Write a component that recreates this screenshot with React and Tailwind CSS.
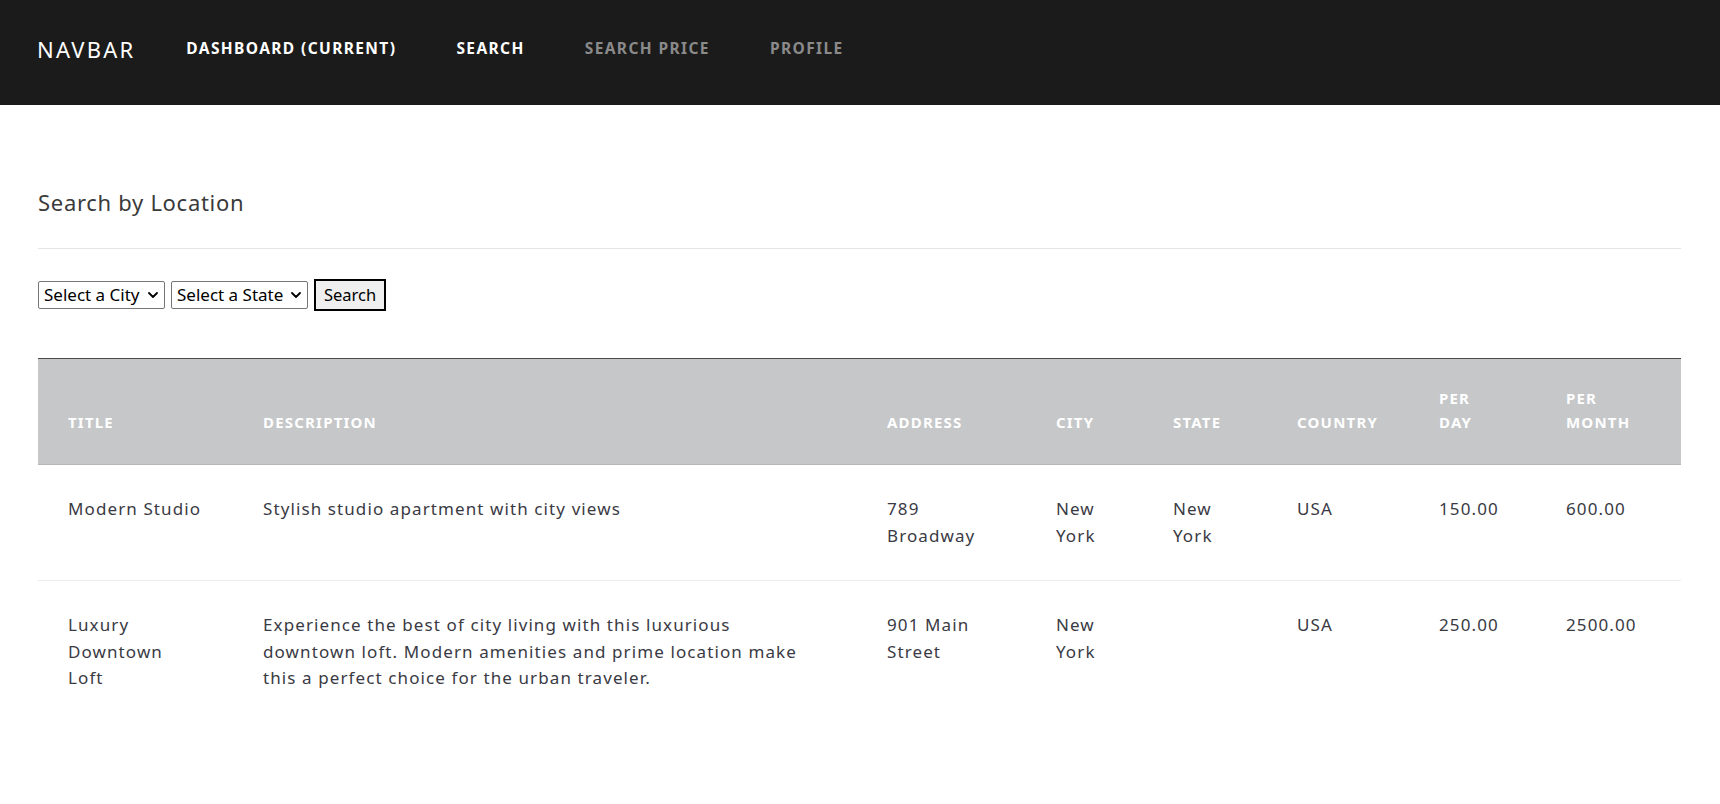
import React from 'react';

const navLinks = [
  { label: 'Dashboard (current)', active: true },
  { label: 'Search', active: true },
  { label: 'Search Price', active: false },
  { label: 'Profile', active: false },
];

const columns = [
  { key: 'title', label: 'Title', width: 'w-[195px]' },
  { key: 'description', label: 'Description', width: 'w-[624px]' },
  { key: 'address', label: 'Address', width: 'w-[169px]' },
  { key: 'city', label: 'City', width: 'w-[117px]' },
  { key: 'state', label: 'State', width: 'w-[124px]' },
  { key: 'country', label: 'Country', width: 'w-[142px]' },
  { key: 'perDay', label: 'Per Day', width: 'w-[127px]' },
  { key: 'perMonth', label: 'Per Month', width: 'w-[145px]' },
];

const listings = [
  {
    title: 'Modern Studio',
    description: 'Stylish studio apartment with city views',
    address: '789 Broadway',
    city: 'New York',
    state: 'New York',
    country: 'USA',
    perDay: '150.00',
    perMonth: '600.00',
  },
  {
    title: 'Luxury Downtown Loft',
    description:
      'Experience the best of city living with this luxurious downtown loft. Modern amenities and prime location make this a perfect choice for the urban traveler.',
    address: '901 Main Street',
    city: 'New York',
    state: '',
    country: 'USA',
    perDay: '250.00',
    perMonth: '2500.00',
  },
];

function Navbar() {
  return (
    <nav className="h-[105px] bg-[#1b1b1b] flex items-center pl-[37px] pb-[7px]">
      <a href="#" className="text-white text-[22px] tracking-[2.2px] mr-[21px]">
        NAVBAR
      </a>
      <ul className="flex items-center">
        {navLinks.map((link) => (
          <li key={link.label}>
            <a
              href="#"
              className={`block px-[30px] text-[15.5px] font-bold uppercase tracking-[1.4px] ${
                link.active ? 'text-white' : 'text-[#8a8a8a]'
              }`}
            >
              {link.label}
            </a>
          </li>
        ))}
      </ul>
    </nav>
  );
}

function Dropdown({ label, width }) {
  return (
    <div className="relative">
      <select
        className={`${width} h-[28px] appearance-none border border-[#767676] rounded-[2px] pl-[5px] pr-[20px] text-[17px] leading-[26px] text-black bg-white`}
      >
        <option>{label}</option>
      </select>
      <svg
        className="absolute right-[7px] top-[11px] pointer-events-none"
        width="10"
        height="6"
        viewBox="0 0 10 6"
        fill="none"
      >
        <path d="M1 1l4 4 4-4" stroke="#000" strokeWidth="1.8" strokeLinecap="round" strokeLinejoin="round" />
      </svg>
    </div>
  );
}

export default function App() {
  return (
    <div className="min-h-screen bg-white text-[#333] font-['Noto_Sans','Open_Sans',sans-serif]">
      <Navbar />

      <main className="pl-[38px] pr-[39px] pt-[82px] pb-[60px]">
        <h2 className="text-[22px] leading-[30px] tracking-[0.7px] text-[#3a3a3a]">Search by Location</h2>
        <hr className="mt-[31px] border-t border-[#e6e6e6]" />

        <form className="mt-[30px] flex items-center gap-[6px]" onSubmit={(e) => e.preventDefault()}>
          <Dropdown label="Select a City" width="w-[127px]" />
          <Dropdown label="Select a State" width="w-[137px]" />
          <button
            type="submit"
            className="h-[32px] w-[72px] border-2 border-black bg-[#efefef] text-[16.5px] text-black"
          >
            Search
          </button>
        </form>

        <table className="mt-[47px] w-full table-fixed border-collapse">
          <thead>
            <tr className="bg-[#c6c7c9] border-t border-b border-t-[#4a4a4d] border-b-[#b6b7b9]">
              {columns.map((col) => (
                <th
                  key={col.key}
                  className={`${col.width} px-[30px] pt-[27px] pb-[30px] text-left align-bottom text-[15px] leading-[24px] font-bold uppercase tracking-[1.2px] text-white`}
                >
                  {col.label}
                </th>
              ))}
            </tr>
          </thead>
          <tbody>
            {listings.map((row, i) => (
              <tr key={row.title} className={i < listings.length - 1 ? 'border-b border-[#ececec]' : ''}>
                {columns.map((col) => (
                  <td
                    key={col.key}
                    className="px-[30px] py-[31px] align-top text-[17px] leading-[26.5px] tracking-[1.1px] text-[#3a3a44]"
                  >
                    {col.key === 'description' ? (
                      <div className="max-w-[545px]">{row[col.key]}</div>
                    ) : (
                      row[col.key]
                    )}
                  </td>
                ))}
              </tr>
            ))}
          </tbody>
        </table>
      </main>
    </div>
  );
}
